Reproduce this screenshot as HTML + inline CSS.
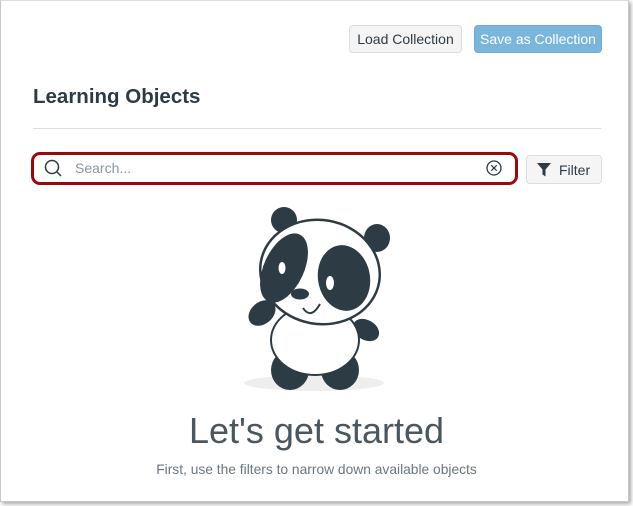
<!DOCTYPE html>
<html><head><style>
body{margin:0;width:633px;height:506px;background:#fff;font-family:"Liberation Sans",sans-serif;overflow:hidden;position:relative}
.frame{position:absolute;left:0;top:0;width:627px;height:500px;border:1px solid #c8c8c8;border-top-color:#ddd;box-shadow:2px 2px 4px rgba(0,0,0,.35)}
.btn{position:absolute;top:25px;height:26px;border-radius:4px;font-size:14px;line-height:26px;text-align:center}
.b1{left:349px;width:111px;background:#f4f4f4;border:1px solid #ddd;color:#2d3b45}
.b2{left:474px;width:126px;background:#7ab6dc;border:1px solid #72acd2;color:#fff}
h1{position:absolute;left:33px;top:85px;margin:0;font-size:20.5px;font-weight:bold;color:#2d3b45}
.hr{position:absolute;left:33px;top:128px;width:568px;height:1px;background:#ddd}
.search{position:absolute;left:31px;top:152px;width:481px;height:27px;border:3px solid #9a0a0a;border-radius:9px;background:#fff}
.search span{position:absolute;left:41px;top:5px;font-size:14px;color:#8b969e}
.filter{position:absolute;left:526px;top:155px;width:74px;height:27px;border:1px solid #ddd;border-radius:4px;background:#f5f5f5;font-size:14px;color:#2d3b45}
.title{position:absolute;left:0;width:633px;top:410px;text-align:center;font-size:36px;color:#4a5761}
.sub{position:absolute;left:0;width:633px;top:462px;text-align:center;font-size:13.8px;color:#6b7780}
</style></head><body>
<div class="frame"></div>
<div class="btn b1">Load Collection</div>
<div class="btn b2">Save as Collection</div>
<h1>Learning Objects</h1>
<div class="hr"></div>
<div class="search">
<svg width="22" height="22" style="position:absolute;left:9px;top:3px" viewBox="0 0 22 22"><circle cx="9" cy="9" r="6.5" fill="none" stroke="#2d3b45" stroke-width="1.5"/><line x1="13.5" y1="13.5" x2="18" y2="18" stroke="#2d3b45" stroke-width="1.5"/></svg>
<span>Search...</span>
<svg width="18" height="18" style="position:absolute;left:451px;top:4px" viewBox="0 0 18 18"><circle cx="9" cy="9" r="7" fill="none" stroke="#2d3b45" stroke-width="1.3"/><path d="M6.3 6.3l5.4 5.4M11.7 6.3l-5.4 5.4" stroke="#2d3b45" stroke-width="1.3"/></svg>
</div>
<div class="filter">
<svg width="16" height="16" style="position:absolute;left:9px;top:6px" viewBox="0 0 16 16"><path d="M1 1h14l-5.5 6.5v7l-3-2v-5z" fill="#2d3b45"/></svg>
<span style="position:absolute;left:32px;top:6px">Filter</span></div>
<svg style="position:absolute;left:0;top:0" width="633" height="506">
<ellipse cx="314" cy="383" rx="70" ry="8" fill="#eeeeee"/>
<ellipse cx="284" cy="220" rx="13" ry="13" fill="#2d3b45"/>
<ellipse cx="377" cy="238" rx="13" ry="14" fill="#2d3b45"/>
<ellipse cx="262" cy="313" rx="15" ry="11" transform="rotate(-40 262 313)" fill="#2d3b45"/>
<ellipse cx="366" cy="330" rx="14" ry="10" transform="rotate(30 366 330)" fill="#2d3b45"/>
<ellipse cx="290" cy="370" rx="19" ry="20" fill="#2d3b45"/>
<ellipse cx="340" cy="370" rx="19" ry="20" fill="#2d3b45"/>
<ellipse cx="315" cy="340" rx="44" ry="35" fill="#fff" stroke="#2d3b45" stroke-width="2"/>
<ellipse cx="320" cy="272" rx="60" ry="52" transform="rotate(10 320 272)" fill="#fff" stroke="#2d3b45" stroke-width="2.5"/>
<ellipse cx="284" cy="268" rx="20" ry="37" transform="rotate(25 284 268)" fill="#2d3b45"/>
<ellipse cx="344" cy="278" rx="26" ry="33" transform="rotate(-10 344 278)" fill="#2d3b45"/>
<ellipse cx="282" cy="268" rx="3.5" ry="6" fill="#fff"/>
<ellipse cx="330" cy="283" rx="4" ry="7" fill="#fff"/>
<ellipse cx="300" cy="294" rx="9" ry="5.5" fill="#2d3b45"/>
<path d="M303 308q8 12 17 -4" fill="#fff" stroke="#2d3b45" stroke-width="2"/>
</svg>
<div class="title">Let's get started</div>
<div class="sub">First, use the filters to narrow down available objects</div>
</body></html>
